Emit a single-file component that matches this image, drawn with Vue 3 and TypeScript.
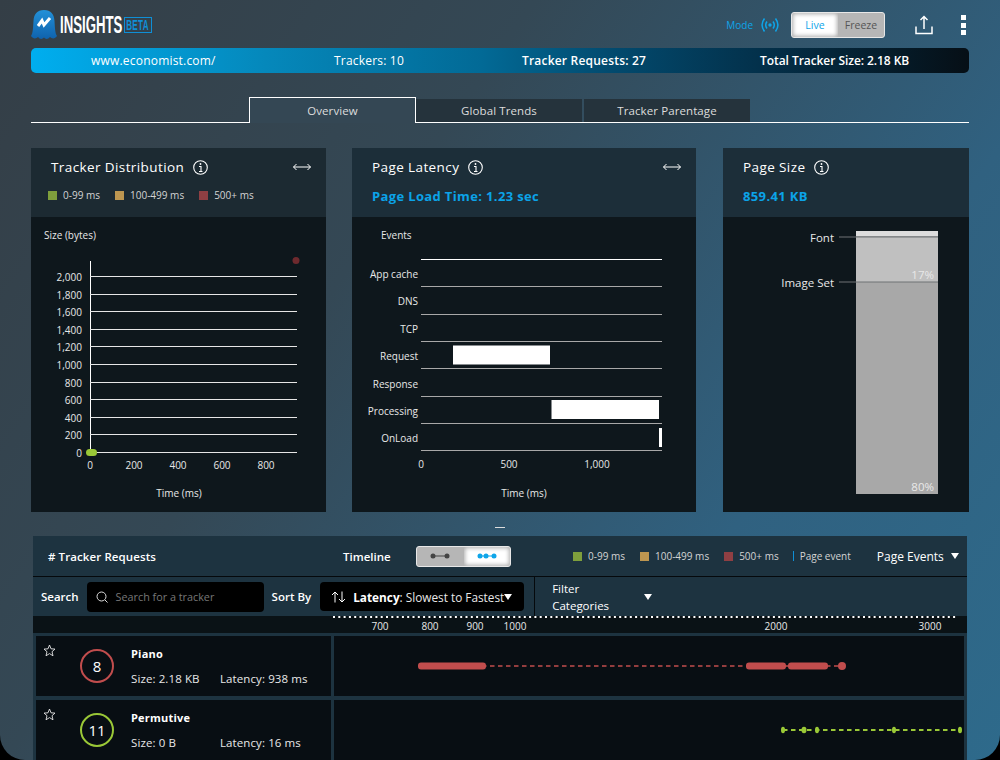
<script setup lang="ts">
const summary = ['www.economist.com/', 'Trackers: 10', 'Tracker Requests: 27', 'Total Tracker Size: 2.18 KB'];
const tabs = ['Overview', 'Global Trends', 'Tracker Parentage'];

const legend = [
  { label: '0-99 ms', color: '#7e9f3c' },
  { label: '100-499 ms', color: '#bd9650' },
  { label: '500+ ms', color: '#8f3f43' },
];

// charts are drawn in page coordinates, the viewBox shifts them into the card
const sizeTicks = [2000, 1800, 1600, 1400, 1200, 1000, 800, 600, 400, 200, 0].map((value, i) => ({
  label: value.toLocaleString('en-US'),
  y: Math.round(276 + i * 17.6) + 0.5,
}));
const timeTicks = [0, 200, 400, 600, 800].map((value) => ({ label: String(value), x: 90 + value * 0.22 }));

const latencyRows = [
  { label: 'App cache', y: 274, line: 286.5 },
  { label: 'DNS', y: 301, line: 314.5 },
  { label: 'TCP', y: 329, line: 341.5 },
  { label: 'Request', y: 356, line: 368.5 },
  { label: 'Response', y: 384, line: 396.5 },
  { label: 'Processing', y: 411, line: 423.5 },
  { label: 'OnLoad', y: 438, line: 450.5 },
];
const latencyBars = [
  { x: 453, y: 345.5, w: 97, h: 19 },
  { x: 551.5, y: 400, w: 107.5, h: 19 },
  { x: 659, y: 428, w: 3, h: 19 },
];
const latencyTicks = [
  { label: '0', x: 421 },
  { label: '500', x: 509 },
  { label: '1,000', x: 597 },
];

const axisLabels = [
  { label: '700', x: 380 },
  { label: '800', x: 430 },
  { label: '900', x: 475 },
  { label: '1000', x: 515 },
  { label: '2000', x: 776 },
  { label: '3000', x: 930 },
];

const trackers = [
  {
    name: 'Piano',
    count: 8,
    size: '2.18 KB',
    latency: '938 ms',
    color: '#c14d4d',
    line: [84, 508],
    weight: 1.5,
    bars: [
      [84, 68],
      [412, 40],
      [454, 40],
    ],
    dots: [[508, 4, 4]],
  },
  {
    name: 'Permutive',
    count: 11,
    size: '0 B',
    latency: '16 ms',
    color: '#9ac837',
    line: [449, 626],
    weight: 2,
    bars: [],
    dots: [
      [449, 2, 3.2],
      [470, 2.5, 3.2],
      [483, 2, 3.2],
      [560, 2, 3.2],
      [626, 2, 3.2],
    ],
  },
];
</script>

<template>
  <div class="page">
    <header class="top">
      <div class="logo">
        <svg class="ghost" width="26" height="29" viewBox="0 0 26 29">
          <defs>
            <linearGradient id="ghost-fill" x1="0" y1="0" x2="0" y2="1">
              <stop offset="0" stop-color="#2391d8" />
              <stop offset="1" stop-color="#0f62ad" />
            </linearGradient>
          </defs>
          <path
            d="M13 0C20 0 23 4 23.500 11C24 18 24 23 26 26C24 29 21 29 19 27C17 29.500 14.500 29.500 13 27.500C11 29.500 9 29.500 7 27C5 29 2 29 0 26C2 23 2 18 2.500 11C3 4 6 0 13 0Z"
            fill="url(#ghost-fill)"
          />
          <path d="M7 16L11 10.500L13 15L19 8" fill="none" stroke="#fff" stroke-width="3" />
        </svg>
        <span class="logo-name">INSIGHTS</span>
        <span class="logo-beta"><span>BETA</span></span>
      </div>
      <div class="top-tools">
        <span class="mode">Mode</span>
        <svg class="signal" width="18" height="16" viewBox="0 0 18 16" fill="none" stroke="#0ea5e9" stroke-width="1.500">
          <circle cx="9" cy="8" r="1.700" fill="#0ea5e9" stroke="none" />
          <path d="M6 4.500C4.500 6.500 4.500 9.500 6 11.500M12 4.500C13.500 6.500 13.500 9.500 12 11.500" />
          <path d="M3.500 1.500C0.500 5.500 0.500 10.500 3.500 14.500M14.500 1.500C17.500 5.500 17.500 10.500 14.500 14.500" />
        </svg>
        <div class="switch">
          <span class="switch-on live">Live</span>
          <span class="switch-off">Freeze</span>
        </div>
        <svg class="share" width="18" height="20" viewBox="0 0 18 20" fill="none" stroke="#fff" stroke-width="1.500">
          <path d="M9 14V1.500M5.500 5L9 1.500L12.500 5" />
          <path d="M1 11.500V18.500H17V11.500" />
        </svg>
        <div class="kebab"><i></i><i></i><i></i></div>
      </div>
    </header>

    <div class="summary">
      <span v-for="item in summary" :key="item">{{ item }}</span>
    </div>

    <nav class="tabs">
      <span v-for="(tab, i) in tabs" :key="tab" :class="['tab', { active: i === 0 }]">{{ tab }}</span>
    </nav>

    <section class="cards">
      <article class="card card-dist">
        <div class="card-head">
          <div class="card-title">
            Tracker Distribution
            <svg class="info" width="15" height="15" viewBox="0 0 15 15" fill="none" stroke="#fff" stroke-width="1.100">
              <circle cx="7.500" cy="7.500" r="6.800" />
              <path d="M6 6.500H8V11.500M6 11.500H9.500" />
              <circle cx="7.500" cy="4" r="0.900" fill="#fff" stroke="none" />
            </svg>
            <svg class="expand" width="18" height="8" viewBox="0 0 18 8" fill="none" stroke="#fff" stroke-width="1">
              <path d="M0.500 4H17.500M3.500 1L0.500 4L3.500 7M14.500 1L17.500 4L14.500 7" />
            </svg>
          </div>
          <div class="legend card-legend">
            <span v-for="item in legend" :key="item.label" class="legend-item">
              <i :style="{ background: item.color }"></i>{{ item.label }}
            </span>
          </div>
        </div>
        <svg class="chart" width="295" height="295" viewBox="31 217 295 295">
          <text class="txt" x="44" y="239">Size (bytes)</text>
          <line x1="90.500" y1="261" x2="90.500" y2="453" stroke="#fff" />
          <g v-for="tick in sizeTicks" :key="tick.label">
            <line x1="90" :y1="tick.y" x2="297" :y2="tick.y" stroke="#e6e6e6" />
            <text class="txt" x="82" :y="tick.y + 4" text-anchor="end">{{ tick.label }}</text>
          </g>
          <text v-for="tick in timeTicks" :key="tick.label" class="txt" :x="tick.x" y="469" text-anchor="middle">{{ tick.label }}</text>
          <text class="txt" x="179" y="497" text-anchor="middle">Time (ms)</text>
          <rect x="86" y="449" width="11" height="7" rx="3.500" fill="#9ac837" />
          <circle cx="296" cy="260.500" r="3.500" fill="#6e2a2e" />
        </svg>
      </article>

      <article class="card card-latency">
        <div class="card-head">
          <div class="card-title">
            Page Latency
            <svg class="info" width="15" height="15" viewBox="0 0 15 15" fill="none" stroke="#fff" stroke-width="1.100">
              <circle cx="7.500" cy="7.500" r="6.800" />
              <path d="M6 6.500H8V11.500M6 11.500H9.500" />
              <circle cx="7.500" cy="4" r="0.900" fill="#fff" stroke="none" />
            </svg>
            <svg class="expand" width="18" height="8" viewBox="0 0 18 8" fill="none" stroke="#fff" stroke-width="1">
              <path d="M0.500 4H17.500M3.500 1L0.500 4L3.500 7M14.500 1L17.500 4L14.500 7" />
            </svg>
          </div>
          <div class="card-value">Page Load Time: 1.23 sec</div>
        </div>
        <svg class="chart" width="344" height="295" viewBox="352 217 344 295">
          <text class="txt" x="381" y="239">Events</text>
          <line x1="421" y1="259.500" x2="662" y2="259.500" stroke="#fff" />
          <g v-for="row in latencyRows" :key="row.label">
            <line x1="421" :y1="row.line" x2="662" :y2="row.line" stroke="#a8a8a8" />
            <text class="txt" x="418" :y="row.y + 4" text-anchor="end">{{ row.label }}</text>
          </g>
          <rect v-for="bar in latencyBars" :key="bar.x" :x="bar.x" :y="bar.y" :width="bar.w" :height="bar.h" fill="#fff" />
          <text v-for="tick in latencyTicks" :key="tick.label" class="txt" :x="tick.x" y="468" text-anchor="middle">{{ tick.label }}</text>
          <text class="txt" x="524" y="497" text-anchor="middle">Time (ms)</text>
        </svg>
      </article>

      <article class="card card-size">
        <div class="card-head">
          <div class="card-title">
            Page Size
            <svg class="info" width="15" height="15" viewBox="0 0 15 15" fill="none" stroke="#fff" stroke-width="1.100">
              <circle cx="7.500" cy="7.500" r="6.800" />
              <path d="M6 6.500H8V11.500M6 11.500H9.500" />
              <circle cx="7.500" cy="4" r="0.900" fill="#fff" stroke="none" />
            </svg>
          </div>
          <div class="card-value">859.41 KB</div>
        </div>
        <svg class="chart" width="246" height="295" viewBox="723 217 246 295">
          <rect x="856" y="231" width="82" height="5.500" fill="#dcdcdc" />
          <rect x="856" y="236.500" width="82" height="45.500" fill="#c0c0c0" />
          <rect x="856" y="282" width="82" height="212" fill="#a8a8a8" />
          <line x1="839" y1="237" x2="938" y2="237" stroke="#6e7275" />
          <line x1="839" y1="282" x2="938" y2="282" stroke="#6e7275" />
          <text class="txt txt-lg" x="834" y="242" text-anchor="end">Font</text>
          <text class="txt txt-lg" x="834" y="287" text-anchor="end">Image Set</text>
          <text class="txt txt-lg" x="934" y="279" text-anchor="end">17%</text>
          <text class="txt txt-lg" x="934" y="491" text-anchor="end">80%</text>
        </svg>
      </article>
    </section>

    <div class="collapse"><i></i></div>

    <section class="panel">
      <div class="panel-head">
        <span class="panel-title"># Tracker Requests</span>
        <span class="timeline-label">Timeline</span>
        <div class="switch switch-small">
          <span class="switch-off">
            <svg width="20" height="6" viewBox="0 0 20 6">
              <path d="M3 3H17" stroke="#444" />
              <circle cx="3" cy="3" r="2.500" fill="#444" />
              <circle cx="17" cy="3" r="2.500" fill="#444" />
            </svg>
          </span>
          <span class="switch-on">
            <svg width="20" height="6" viewBox="0 0 20 6">
              <path d="M3 3H17" stroke="#0ea5e9" />
              <circle cx="3" cy="3" r="2.500" fill="#0ea5e9" />
              <circle cx="9" cy="3" r="2.500" fill="#0ea5e9" />
              <circle cx="17" cy="3" r="2.500" fill="#0ea5e9" />
            </svg>
          </span>
        </div>
        <div class="legend panel-legend">
          <span v-for="item in legend" :key="item.label" class="legend-item">
            <i :style="{ background: item.color }"></i>{{ item.label }}
          </span>
          <span class="legend-event">Page event</span>
        </div>
        <span class="page-events">Page Events<b class="caret"></b></span>
      </div>

      <div class="panel-filters">
        <span class="filter-label search-label">Search</span>
        <div class="search-box">
          <svg width="12" height="12" viewBox="0 0 12 12" fill="none" stroke="#ddd" stroke-width="1">
            <circle cx="5.500" cy="5.500" r="4.500" />
            <path d="M9 9L11.500 11.500" />
          </svg>
          <span>Search for a tracker</span>
        </div>
        <span class="filter-label sort-label">Sort By</span>
        <div class="sort-box">
          <svg width="15" height="12" viewBox="0 0 15 12" fill="none" stroke="#fff" stroke-width="1">
            <path d="M4 11.500V1M1 4L4 1L7 4M11 0.500V11M8 8L11 11L14 8" />
          </svg>
          <span><b>Latency</b>: Slowest to Fastest</span>
          <b class="caret sort-caret"></b>
        </div>
        <div class="filter-cats">
          <span>Filter<br>Categories</span>
          <b class="caret"></b>
        </div>
      </div>

      <div class="axis">
        <svg width="934" height="17" viewBox="33 616 934 17">
          <line x1="333" y1="617" x2="956" y2="617" stroke="#fff" stroke-width="2" stroke-dasharray="2 3.300" />
          <text v-for="tick in axisLabels" :key="tick.label" class="txt axis-txt" :x="tick.x" y="630" text-anchor="middle">{{ tick.label }}</text>
        </svg>
      </div>

      <div class="rows">
        <div v-for="tracker in trackers" :key="tracker.name" class="row">
          <div class="row-info">
            <svg class="star" width="13" height="13" viewBox="0 0 13 13" fill="none" stroke="#e8e8e8" stroke-width="0.900">
              <path d="M6.500 1L8 4.800L12 5.100L9 7.700L10 11.800L6.500 9.600L3 11.800L4 7.700L1 5.100L5 4.800Z" />
            </svg>
            <span class="count" :style="{ borderColor: tracker.color }">{{ tracker.count }}</span>
            <div class="info-text">
              <div class="tracker-name">{{ tracker.name }}</div>
              <div class="tracker-meta">
                <span class="meta-size">Size: {{ tracker.size }}</span>
                <span>Latency: {{ tracker.latency }}</span>
              </div>
            </div>
          </div>
          <svg class="row-line" width="630" height="60" viewBox="0 0 630 60">
            <line :x1="tracker.line[0]" y1="30" :x2="tracker.line[1]" y2="30" :stroke="tracker.color" :stroke-width="tracker.weight" stroke-dasharray="4.500 3.500" />
            <rect v-for="bar in tracker.bars" :key="bar[0]" :x="bar[0]" y="26.500" :width="bar[1]" height="7" rx="3" :fill="tracker.color" />
            <ellipse v-for="dot in tracker.dots" :key="dot[0]" :cx="dot[0]" cy="30" :rx="dot[1]" :ry="dot[2]" :fill="tracker.color" />
          </svg>
        </div>
      </div>
    </section>
  </div>
</template>

<style>
html,
body {
  background: #000;
}
</style>

<style scoped>
.page {
  box-sizing: border-box;
  width: 1000px;
  height: 760px;
  padding: 0 31px;
  overflow: hidden;
  color: #fff;
  font-family: "Open Sans", "Liberation Sans", sans-serif;
  background: linear-gradient(125deg, #343e46 0%, #344855 35%, #306180 72%, #2e6a8b 100%);
  border-radius: 0 0 25px 25px;
}

.top {
  display: flex;
  align-items: flex-start;
  justify-content: space-between;
  height: 48px;
}

.logo {
  display: flex;
  align-items: center;
  padding-top: 10px;
}

.logo-name {
  display: inline-block;
  width: 62px;
  margin-left: 3px;
  font-family: "Liberation Sans", sans-serif;
  font-size: 24px;
  font-weight: 700;
  line-height: 24px;
  white-space: nowrap;
  transform: scaleX(0.55);
  transform-origin: left center;
}

.logo-beta {
  box-sizing: border-box;
  display: flex;
  align-items: center;
  justify-content: center;
  width: 28px;
  height: 16px;
  margin-left: 2px;
  font-family: "Liberation Sans", sans-serif;
  font-size: 14px;
  font-weight: 700;
  line-height: 14px;
  color: #0f8fd6;
  border: 1px solid #0f8fd6;
}

.logo-beta span {
  display: inline-block;
  letter-spacing: 0.5px;
  transform: scaleX(0.58);
}

.top-tools {
  display: flex;
  align-items: center;
  height: 26px;
  margin-top: 12px;
  margin-right: 3px;
}

.mode {
  margin-right: 8px;
  font-size: 10px;
  color: #0ea5e9;
}

.signal {
  margin-right: 12px;
}

.switch {
  box-sizing: border-box;
  display: flex;
  width: 94px;
  height: 26px;
  overflow: hidden;
  font-size: 10.5px;
  background: #b6b6b6;
  border: 1px solid #e8e8e8;
  border-radius: 3px;
}

.switch span {
  display: flex;
  flex: 1;
  align-items: center;
  justify-content: center;
}

.switch-on {
  background: #fff;
  box-shadow: inset 0 0 4px 1px #aaa;
}

.switch-on.live {
  color: #0ea5e9;
}

.switch-off {
  color: #555;
}

.share {
  margin-left: 30px;
}

.kebab {
  display: flex;
  flex-direction: column;
  gap: 2.5px;
  margin-left: 28px;
}

.kebab i {
  width: 5px;
  height: 5px;
  background: #fff;
}

.summary {
  display: grid;
  grid-template-columns: 243px 188px 238px auto;
  align-items: center;
  height: 25px;
  padding-left: 60px;
  font-size: 12px;
  letter-spacing: 0.2px;
  background: linear-gradient(90deg, #00aeef 0%, #0588bb 25%, #026a96 48%, #024a6e 62%, #03304a 78%, #060f16 100%);
  border-radius: 5px;
}

.summary span:nth-child(3) {
  font-weight: 600;
}

.summary span:nth-child(4) {
  font-weight: 600;
  letter-spacing: -0.06px;
}

.tabs {
  display: flex;
  height: 25px;
  padding-left: 218px;
  margin-top: 24px;
  border-bottom: 1px solid #fff;
}

.tab {
  box-sizing: border-box;
  display: flex;
  align-items: center;
  justify-content: center;
  width: 166px;
  height: 23px;
  margin-top: 2px;
  margin-right: 2px;
  font-size: 11.5px;
  color: #ddd;
  letter-spacing: 0.1px;
  background: #25333c;
}

.tab.active {
  width: 167px;
  height: 26px;
  margin-top: 0;
  margin-right: 0;
  background: #344754;
  border: solid #fff;
  border-width: 1px 1px 0;
}

.cards {
  display: flex;
  gap: 26px;
  margin-top: 25px;
}

.card {
  display: flex;
  flex-direction: column;
  height: 364px;
  background: #0e171c;
}

.card-dist {
  width: 295px;
}

.card-latency {
  width: 344px;
}

.card-size {
  width: 246px;
  margin-left: 1px;
}

.card-head {
  box-sizing: border-box;
  height: 69px;
  padding: 9px 15px 0 20px;
  background: #1c2e39;
}

.card-dist .card-head {
  background: #1c2a32;
}

.card-title {
  display: flex;
  align-items: center;
  height: 20px;
  font-size: 13.5px;
  letter-spacing: 0.4px;
}

.info {
  margin-left: 9px;
}

.expand {
  margin-left: auto;
}

.card-value {
  margin-top: 9px;
  font-size: 13px;
  font-weight: 700;
  line-height: 20px;
  color: #0ba3e8;
  letter-spacing: 0.36px;
}

.chart {
  display: block;
}

.txt {
  font-size: 10px;
  fill: #e8e8e8;
}

.txt-lg {
  font-size: 11.5px;
}

.legend {
  display: flex;
  align-items: center;
  font-size: 10px;
  color: #d4d4d4;
}

.legend-item {
  display: flex;
  align-items: center;
}

.legend-item i {
  width: 9px;
  height: 9px;
  margin-right: 6px;
}

.card-legend {
  gap: 15px;
  margin-top: 11px;
  margin-left: -3px;
  line-height: 14px;
}

.collapse {
  display: flex;
  justify-content: center;
  height: 24px;
}

.collapse i {
  width: 10px;
  height: 1px;
  margin-top: 15px;
  background: #ddd;
}

.panel {
  margin: 0 2px;
  background: #1d3340;
}

.panel-head {
  display: flex;
  align-items: center;
  height: 40px;
  padding-left: 15px;
  border-bottom: 1px solid #05090c;
}

.panel-title {
  width: 295px;
  font-size: 11.5px;
  font-weight: 600;
  letter-spacing: 0.1px;
}

.timeline-label {
  width: 73px;
  font-size: 11.5px;
  font-weight: 600;
}

.switch-small {
  width: 95px;
  height: 21px;
}

.panel-legend {
  gap: 15px;
  margin-left: 62px;
}

.legend-event {
  padding-left: 6px;
  margin-left: -1px;
  line-height: 10px;
  border-left: 1px solid #0f8fd6;
}

.page-events {
  display: flex;
  align-items: center;
  margin-left: 26px;
  font-size: 12px;
  font-weight: 500;
}

.caret {
  display: inline-block;
  width: 0;
  height: 0;
  margin-left: 7px;
  border-top: 6px solid #fff;
  border-right: 4px solid transparent;
  border-left: 4px solid transparent;
}

.panel-filters {
  display: flex;
  align-items: center;
  height: 39px;
}

.filter-label {
  font-size: 11.5px;
  font-weight: 600;
}

.search-label {
  margin-left: 8px;
}

.search-box {
  box-sizing: border-box;
  display: flex;
  gap: 8px;
  align-items: center;
  width: 177px;
  height: 30px;
  padding-left: 9px;
  margin-left: 8px;
  font-size: 10.8px;
  color: #777;
  background: #000;
  border-radius: 4px;
}

.sort-label {
  margin-left: 8px;
}

.sort-box {
  box-sizing: border-box;
  display: flex;
  align-items: center;
  width: 204px;
  height: 29px;
  padding-left: 11px;
  margin-left: 9px;
  font-size: 11.8px;
  background: #000;
  border-radius: 4px;
}

.sort-box span {
  margin-left: 7px;
  color: #e8e8e8;
  white-space: nowrap;
}

.sort-box b {
  color: #fff;
}

.sort-caret {
  margin-left: 0;
}

.filter-cats {
  box-sizing: border-box;
  display: flex;
  align-items: center;
  height: 39px;
  padding-left: 17px;
  margin-left: 10px;
  font-size: 11.5px;
  font-weight: 500;
  line-height: 17px;
  border-left: 1px solid #05090c;
}

.filter-cats .caret {
  margin-left: 35px;
}

.axis {
  height: 17px;
  background: #0a1216;
}

.axis svg {
  display: block;
}

.axis-txt {
  font-size: 10px;
}

.rows {
  display: flex;
  flex-direction: column;
  gap: 4px;
  padding: 3px 3px 0;
}

.row {
  display: flex;
  gap: 3px;
  height: 60px;
}

.row-info {
  display: flex;
  width: 295px;
  padding-left: 7px;
  background: #080e13;
}

.row-line {
  display: block;
  flex: none;
  background: #080e13;
}

.star {
  margin-top: 8px;
  margin-right: 24px;
}

.count {
  box-sizing: border-box;
  display: flex;
  align-items: center;
  justify-content: center;
  width: 34px;
  height: 34px;
  margin-top: 13px;
  margin-right: 17px;
  font-size: 15px;
  border: 2.5px solid;
  border-radius: 50%;
}

.info-text {
  padding-top: 10px;
}

.tracker-name {
  font-size: 11px;
  font-weight: 700;
  line-height: 16px;
  letter-spacing: 0.2px;
}

.tracker-meta {
  display: flex;
  margin-top: 9px;
  font-size: 11.5px;
  line-height: 16px;
  color: #e8e8e8;
  letter-spacing: 0.1px;
}

.meta-size {
  width: 89px;
}
</style>
